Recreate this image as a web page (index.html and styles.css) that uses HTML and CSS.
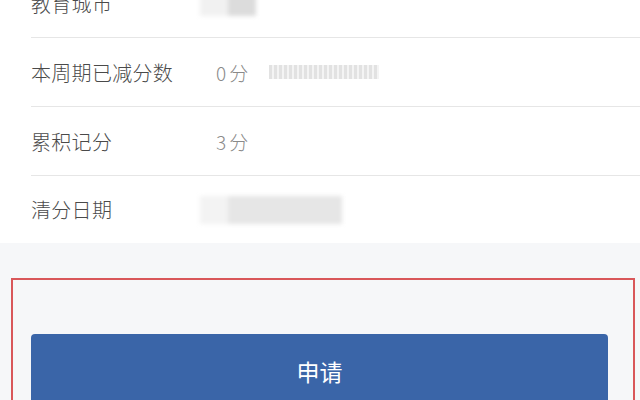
FILE: index.html
```html
<!DOCTYPE html>
<html lang="zh-CN">
<head>
<meta charset="utf-8">
<link rel="stylesheet" href="styles.css">
</head>
<body>
<div class="info">
  <div class="row">
    <span class="label">教育城市</span>
    <span class="value"><span class="mask mask-city"></span></span>
  </div>
  <div class="row">
    <span class="label">本周期已减分数</span>
    <span class="value">0分</span>
    <span class="mask mask-stripes"></span>
  </div>
  <div class="row">
    <span class="label">累积记分</span>
    <span class="value">3分</span>
  </div>
  <div class="row">
    <span class="label">清分日期</span>
    <span class="value"><span class="mask mask-date"></span></span>
  </div>
</div>
<div class="actions">
  <div class="highlight">
    <button class="apply">申请</button>
  </div>
</div>
</body>
</html>
```

FILE: styles.css
```css
html, body {
  margin: 0;
  padding: 0;
}
body {
  background: #f6f7f9;
  font-family: "Noto Sans CJK SC", "Noto Sans", sans-serif;
  width: 640px;
  height: 400px;
  overflow: hidden;
}
.info {
  background: #ffffff;
  margin-top: -31px;
  padding-left: 31px;
}
.row {
  height: 68px;
  display: flex;
  align-items: center;
  border-bottom: 1px solid #e6e6e6;
}
.row:last-child {
  border-bottom: none;
  height: 67px;
}
.label {
  width: 185px;
  font-size: 20px;
  font-weight: 300;
  color: #4a4a4a;
  letter-spacing: 0.3px;
}
.value {
  font-size: 19px;
  font-weight: 300;
  color: #8a8a8a;
  letter-spacing: 3px;
  display: flex;
  align-items: center;
}
.mask {
  display: block;
  filter: blur(2px);
}
.mask-city {
  width: 56px;
  height: 26px;
  margin-left: -16px;
  background: linear-gradient(90deg, #f1f1f1 0 50%, #dcdcdc 50% 100%);
}
.mask-stripes {
  width: 110px;
  height: 14px;
  margin-left: 18px;
  filter: blur(0.6px);
  background: repeating-linear-gradient(90deg, #e2e2e2 0 3px, #f4f4f4 3px 5px);
}
.mask-date {
  width: 142px;
  height: 28px;
  margin-left: -16px;
  background: linear-gradient(90deg, #f3f3f3 0 20%, #e6e6e6 20% 100%);
}
.actions {
  padding: 35px 5px 0 11px;
}
.highlight {
  border: 2px solid #d9575a;
  border-bottom: none;
  padding: 54px 25px 0 18px;
  height: 100px;
}
.apply {
  display: block;
  width: 100%;
  height: 74px;
  border: none;
  border-radius: 4px;
  background: #3a65a8;
  color: #ffffff;
  font-family: "Noto Sans CJK SC", "Noto Sans", sans-serif;
  font-size: 23px;
  padding: 0;
}
```
